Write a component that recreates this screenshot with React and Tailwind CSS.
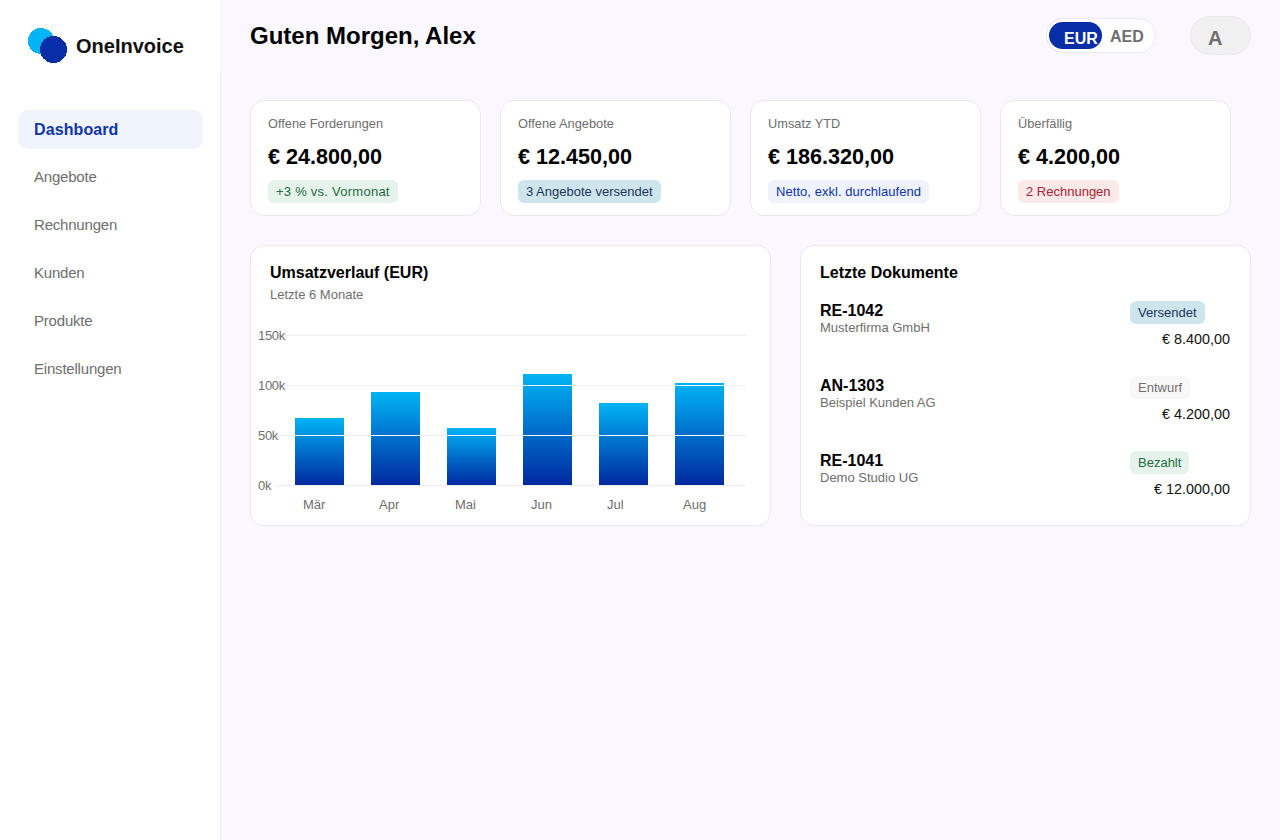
const navItems = ["Dashboard", "Angebote", "Rechnungen", "Kunden", "Produkte", "Einstellungen"];

const kpis = [
  { label: "Offene Forderungen", value: "€ 24.800,00", note: "+3 % vs. Vormonat", tone: "bg-[#e6f3ea] text-[#1f6b43] tracking-[0.25px]" },
  { label: "Offene Angebote", value: "€ 12.450,00", note: "3 Angebote versendet", tone: "bg-[#cfe5ee] text-[#1c3558]" },
  { label: "Umsatz YTD", value: "€ 186.320,00", note: "Netto, exkl. durchlaufend", tone: "bg-[#eef3fd] text-[#0f35a8] tracking-[0.05px]" },
  { label: "Überfällig", value: "€ 4.200,00", note: "2 Rechnungen", tone: "bg-[#fce9ea] text-[#a9232f]" },
];

const docs = [
  { id: "RE-1042", customer: "Musterfirma GmbH", status: "Versendet", tone: "bg-[#cfe5ee] text-[#1c3558]", amount: "€ 8.400,00" },
  { id: "AN-1303", customer: "Beispiel Kunden AG", status: "Entwurf", tone: "bg-[#f8f8f8] text-[#6e6e6e]", amount: "€ 4.200,00" },
  { id: "RE-1041", customer: "Demo Studio UG", status: "Bezahlt", tone: "bg-[#e6f3ea] text-[#1f6b43]", amount: "€ 12.000,00" },
];

const bars = [
  { month: "Mär", x: 44, labelX: 52, top: 98 },
  { month: "Apr", x: 120, labelX: 128, top: 72 },
  { month: "Mai", x: 196, labelX: 204, top: 108 },
  { month: "Jun", x: 272, labelX: 280, top: 54 },
  { month: "Jul", x: 348, labelX: 356, top: 83 },
  { month: "Aug", x: 424, labelX: 432, top: 63 },
];

const ticks = [
  { label: "150k", y: 15 },
  { label: "100k", y: 65 },
  { label: "50k", y: 115 },
  { label: "0k", y: 165 },
];

function RevenueChart() {
  return (
    <svg width="500" height="200" viewBox="0 0 500 200" className="block" style={{ fontFamily: "'Liberation Sans', sans-serif" }}>
      <defs>
        <linearGradient id="barFill" x1="0" y1="0" x2="0" y2="1">
          <stop offset="0" stopColor="#00b4f5" />
          <stop offset="1" stopColor="#0029a0" />
        </linearGradient>
      </defs>
      {ticks.map((t) => (
        <rect key={t.label} x="24" y={t.y} width="471" height="1" fill="#eeeeee" />
      ))}
      {bars.map((b) => (
        <g key={b.month}>
          <rect x={b.x} y={b.top} width="49" height={165 - b.top} fill="url(#barFill)" />
          {b.top < 115 && <rect x={b.x} y="115" width="49" height="1" fill="#f8fbff" />}
          {b.top < 65 && <rect x={b.x} y="65" width="49" height="1" fill="#f8fbff" />}
          <text x={b.labelX} y="189" fontSize="13" fill="#6e6e6e">{b.month}</text>
        </g>
      ))}
      {ticks.map((t) => (
        <text key={t.label} x="7" y={t.y + 5} fontSize="13" letterSpacing="-0.3" fill="#6e6e6e">{t.label}</text>
      ))}
    </svg>
  );
}

export default function App() {
  return (
    <div className="flex min-h-[840px] bg-[#faf8fe] font-['Liberation_Sans',sans-serif] text-black">
      {/* Sidebar */}
      <aside className="w-[221px] shrink-0 bg-white border-r border-[#e9e9ee]">
        <div className="flex items-center gap-[9px] pl-[28px] pt-[28px]">
          <svg width="39" height="35" viewBox="0 0 39 35" shapeRendering="crispEdges">
            <circle cx="13" cy="13" r="13" fill="#00b4f5" />
            <circle cx="25.5" cy="21.5" r="13.5" fill="#072ea6" />
          </svg>
          <span className="text-[20px] font-bold text-[#111111]">OneInvoice</span>
        </div>
        <nav className="mt-[47px] ml-[18px] mr-[17px] flex flex-col gap-[9px]">
          {navItems.map((item, i) => (
            <a
              key={item}
              className={`h-[39px] flex items-center pl-4 rounded-[10px] ${
                i === 0
                  ? "bg-[#eff4fd] text-[#0f35a8] font-bold text-[16px] tracking-[0.1px]"
                  : "text-[#6e6e6e] text-[15px] tracking-[-0.2px]"
              }`}
            >
              {item}
            </a>
          ))}
        </nav>
      </aside>

      <div className="flex-1 min-w-0">
        {/* Header */}
        <header className="relative -ml-px h-[72px] bg-[#faf8fe] flex pl-[30px]">
          <h1 className="text-[24px] font-bold leading-[71px]">Guten Morgen, Alex</h1>
          <div className="ml-auto flex items-start pt-4 pr-[29px]">
            <div className="mt-[2px] flex items-center h-[35px] w-[110px] rounded-full bg-white border border-[#e9e9ee] pl-[2px]">
              <span className="h-[27px] w-[53px] rounded-full bg-[#072ea6] text-white font-bold text-[16px] pl-[15px] leading-[33px] whitespace-nowrap">EUR</span>
              <span className="ml-[8px] mt-[2px] text-[#6e6e6e] font-bold text-[16px] leading-[33px]">AED</span>
            </div>
            <div className="ml-[34px] h-[39px] w-[61px] rounded-full bg-[#f0f0f0] border border-[#e9e9ee] pl-[17px] text-[#6e6e6e] font-bold text-[20px] leading-[42px]">A</div>
          </div>
        </header>

        <main className="-ml-px pl-[30px] pt-[28px]">
          {/* KPI cards */}
          <div className="grid grid-cols-[repeat(4,231px)] gap-[19px]">
            {kpis.map((k) => (
              <div key={k.label} className="h-[116px] rounded-[14px] bg-white border border-[#e9e9ee] pl-[17px] pt-[15px]">
                <div className="text-[12.8px] leading-[15px] text-[#6e6e6e]">{k.label}</div>
                <div className="mt-[13px] text-[21.6px] font-bold leading-[25px]">{k.value}</div>
                <span className={`mt-[11px] inline-block h-[23px] rounded-[6px] px-2 text-[13px] leading-[23px] ${k.tone}`}>{k.note}</span>
              </div>
            ))}
          </div>

          <div className="mt-[29px] grid grid-cols-[521px_451px] gap-[29px]">
            {/* Revenue chart */}
            <section className="h-[281px] rounded-[14px] bg-white border border-[#e9e9ee] pl-[19px] pt-[18px]">
              <h2 className="text-[16px] font-bold leading-[18px]">Umsatzverlauf (EUR)</h2>
              <p className="mt-[5px] text-[13px] leading-[15px] text-[#6e6e6e]">Letzte 6 Monate</p>
              <div className="-ml-[19px] mt-[18px]">
                <RevenueChart />
              </div>
            </section>

            {/* Recent documents */}
            <section className="h-[281px] rounded-[14px] bg-white border border-[#e9e9ee] pl-[19px] pr-[20px] pt-[18px]">
              <h2 className="text-[16px] font-bold leading-[18px]">Letzte Dokumente</h2>
              <div className="mt-[18px] flex flex-col gap-[25px]">
                {docs.map((d) => (
                  <div key={d.id} className="flex justify-between h-[50px]">
                    <div className="pt-[2px]">
                      <div className="text-[16px] font-bold leading-[18px]">{d.id}</div>
                      <div className="text-[13px] leading-[15px] text-[#6e6e6e]">{d.customer}</div>
                    </div>
                    <div className="w-[100px]">
                      <span className={`inline-block h-[23px] rounded-[6px] px-2 text-[13px] leading-[23px] ${d.tone}`}>{d.status}</span>
                      <div className="mt-[7px] text-right text-[14.4px] leading-[17px] text-[#111111]">{d.amount}</div>
                    </div>
                  </div>
                ))}
              </div>
            </section>
          </div>
        </main>
      </div>
    </div>
  );
}
